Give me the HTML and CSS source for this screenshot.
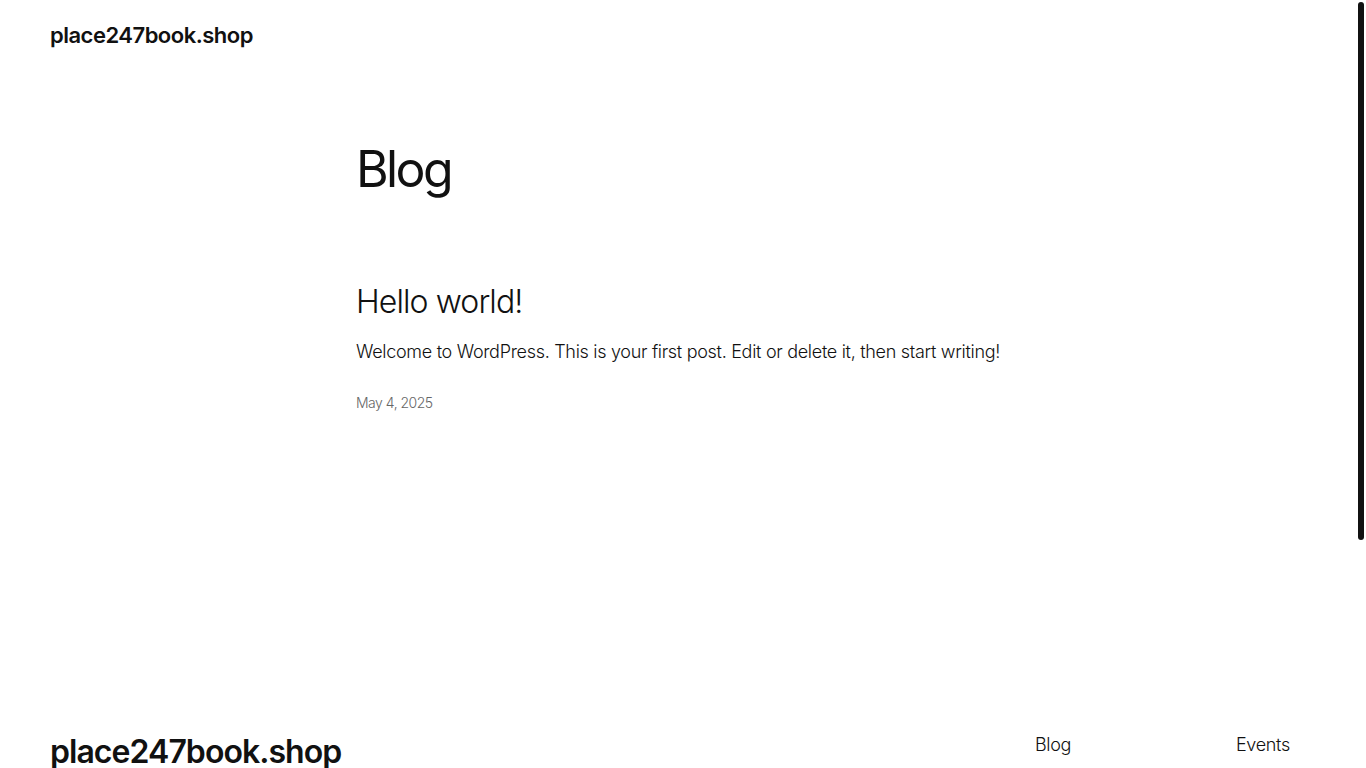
FILE: index.html
```html
<!DOCTYPE html>
<html lang="en">
<head>
<meta charset="utf-8">
<title>Blog – place247book.shop</title>
<link rel="stylesheet" href="styles.css">
</head>
<body>
<header class="site-header">
  <a class="site-title" href="#">place247book.shop</a>
</header>
<main class="site-main">
  <div class="content">
    <h1 class="page-title">Blog</h1>
    <article class="post">
      <h2 class="post-title">Hello world!</h2>
      <p class="post-excerpt">Welcome to WordPress. This is your first post. Edit or delete it, then start writing!</p>
      <div class="post-date">May 4, 2025</div>
    </article>
  </div>
</main>
<footer class="site-footer">
  <a class="footer-title" href="#">place247book.shop</a>
  <nav class="footer-nav">
    <ul class="footer-col">
      <li><a href="#">Blog</a></li>
    </ul>
    <ul class="footer-col">
      <li><a href="#">Events</a></li>
    </ul>
  </nav>
</footer>
<div class="scroll-thumb"></div>
</body>
</html>
```
FILE: styles.css
```css
html {
  scrollbar-width: none;
}
html::-webkit-scrollbar {
  display: none;
}
body {
  margin: 0;
  background: #fff;
  color: #111;
  font-family: Inter, "Noto Sans", "Liberation Sans", sans-serif;
  font-weight: 300;
}
a {
  color: inherit;
  text-decoration: none;
}
.site-header {
  padding: 20px 50px;
  height: 30px;
  display: flex;
  align-items: center;
}
.site-title {
  font-size: 22px;
  font-weight: 600;
  letter-spacing: -0.5px;
}
.site-main {
  padding-top: 69px;
  min-height: 587px;
}
.content {
  width: 654px;
  margin: 0 auto;
}
.page-title {
  margin: 0;
  font-size: 50px;
  font-weight: 400;
  letter-spacing: -2.6px;
  line-height: 1.2;
}
.post {
  margin-top: 84px;
}
.post-title {
  margin: 0;
  font-size: 32px;
  font-weight: 300;
  letter-spacing: -0.9px;
  line-height: 1.2;
}
.post-excerpt {
  margin: 17px 0 0;
  font-size: 18px;
  line-height: 1.5;
  letter-spacing: -0.3px;
}
.post-date {
  margin-top: 29px;
  font-size: 14px;
  color: #666;
  letter-spacing: -0.5px;
}
.site-footer {
  padding: 0 76px 0 50px;
  display: flex;
  justify-content: space-between;
  align-items: flex-start;
}
.footer-title {
  font-size: 32px;
  font-weight: 600;
  letter-spacing: -0.95px;
  line-height: 1.2;
  margin-top: 7px;
}
.footer-nav {
  display: flex;
  gap: 128px;
  margin-top: 5px;
}
.footer-col {
  list-style: none;
  margin: 0;
  padding: 0;
  width: 73px;
  font-size: 18px;
  line-height: 1.5;
  letter-spacing: -0.3px;
  display: flex;
  flex-direction: column;
}
.footer-col:last-child {
  width: auto;
}
.scroll-thumb {
  position: fixed;
  top: 2px;
  right: 2px;
  width: 6px;
  height: 538px;
  background: #111;
  border-radius: 3px;
}
```
